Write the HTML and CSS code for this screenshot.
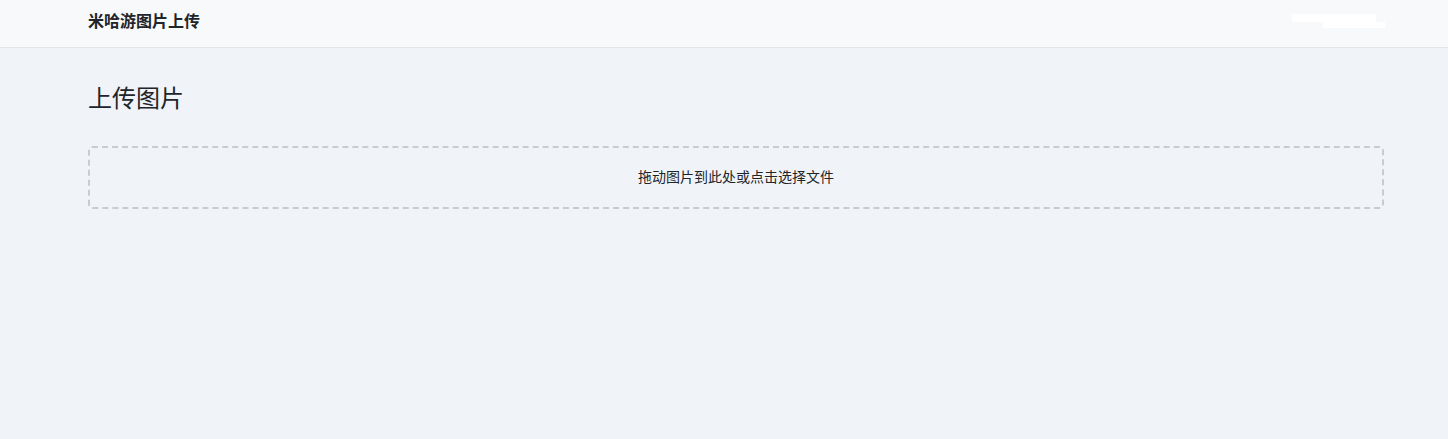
FILE: index.html
```html
<!DOCTYPE html>
<html lang="zh-CN">
<head>
    <meta charset="UTF-8">
    <meta name="viewport" content="width=device-width, initial-scale=1.0">
    <title>米哈游图片上传</title>
    <link rel="stylesheet" href="styles.css">
</head>
<body>

<!-- Top bar -->
<nav class="navbar">
    <div class="container nav-inner">
        <span class="brand">米哈游图片上传</span>
        <div class="user-box">
            <span class="user-line1"></span>
            <span class="user-line2"></span>
        </div>
    </div>
</nav>

<!-- Upload area -->
<div class="container main">
    <h2 class="title">上传图片</h2>
    <div class="drop-zone" id="dropZone">
        <p>拖动图片到此处或点击选择文件</p>
        <input type="file" id="fileInput" accept="image/*" class="hidden">
    </div>
</div>

</body>
</html>
```

FILE: styles.css
```css
body {
    font-family: "Noto Sans CJK SC", "Microsoft YaHei", sans-serif;
    background-color: #f0f3f7;
    color: #212529;
    margin: 0;
}
.container {
    padding-left: 88px;
    padding-right: 64px;
}
.navbar {
    background-color: #f8f9fb;
    border-bottom: 1px solid #e3e5e8;
    height: 47px;
}
.nav-inner {
    display: flex;
    justify-content: space-between;
    align-items: center;
    height: 100%;
}
.brand {
    font-size: 16px;
    font-weight: bold;
    color: #212529;
    margin-bottom: 7px;
}
.user-box {
    display: flex;
    flex-direction: column;
    width: 95px;
    margin-top: -6px;
    margin-right: -3px;
}
.user-line1 {
    display: block;
    width: 84px;
    height: 8px;
    background-color: #fff;
}
.user-line2 {
    display: block;
    width: 62px;
    height: 6px;
    margin-left: 31px;
    background-color: #fff;
}
.main {
    padding-top: 31px;
}
.title {
    font-size: 24px;
    font-weight: normal;
    margin: 0 0 31px 0;
    line-height: 1.5;
}
.drop-zone {
    border: 2px dashed #c9cbcd;
    border-radius: 4px;
    height: 59px;
    box-sizing: content-box;
    display: flex;
    justify-content: center;
    align-items: center;
    cursor: pointer;
}
.drop-zone p {
    margin: 0 0 4px 0;
    font-size: 14px;
}
.hidden {
    display: none;
}
```
